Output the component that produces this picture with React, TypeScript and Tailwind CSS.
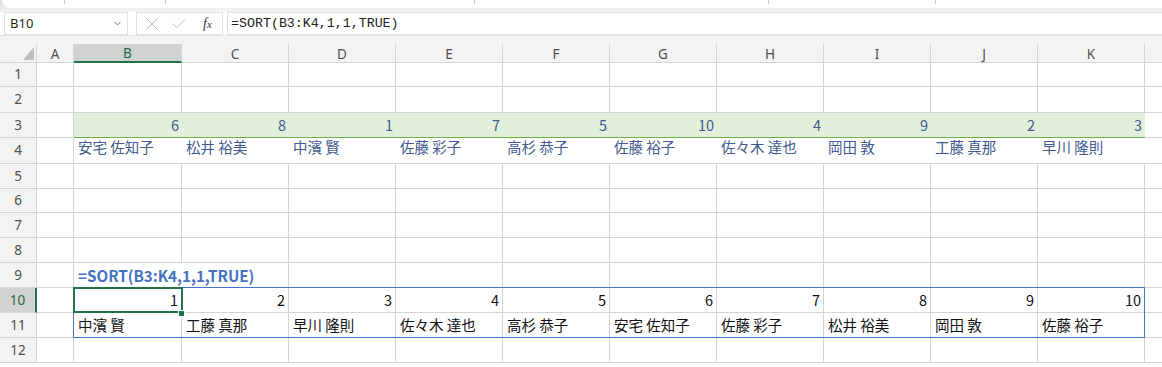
import React from "react";
import { X, Check, ChevronDown } from "lucide-react";

const COLS = ["A", "B", "C", "D", "E", "F", "G", "H", "I", "J", "K"];

const colWidth = (c: string) =>
  c === "A" ? "w-[37px]" : c === "B" ? "w-[108px]" : "w-[107px]";

const ROW_HEIGHTS = [
  "h-[24px]",
  "h-[26px]",
  "h-[25px]",
  "h-[26px]",
  "h-[25px]",
  "h-[24px]",
  "h-[25px]",
  "h-[25px]",
  "h-[25px]",
  "h-[25px]",
  "h-[25px]",
  "h-[25px]",
];

const numbers = [6, 8, 1, 7, 5, 10, 4, 9, 2, 3];
const names = [
  "安宅 佐知子",
  "松井 裕美",
  "中濱 賢",
  "佐藤 彩子",
  "高杉 恭子",
  "佐藤 裕子",
  "佐々木 達也",
  "岡田 敦",
  "工藤 真那",
  "早川 隆則",
];
const sortedNames = [
  "中濱 賢",
  "工藤 真那",
  "早川 隆則",
  "佐々木 達也",
  "高杉 恭子",
  "安宅 佐知子",
  "佐藤 彩子",
  "松井 裕美",
  "岡田 敦",
  "佐藤 裕子",
];

const cellFont = "font-['Noto_Sans_CJK_JP','Noto_Sans',sans-serif] text-[14.5px]";

const Cell = ({
  width,
  className = "",
  children,
}: {
  width: string;
  className?: string;
  children?: React.ReactNode;
}) => (
  <div className={`${width} shrink-0 flex items-center whitespace-nowrap ${className}`}>
    {children}
  </div>
);

const renderRow = (row: number) => {
  const grid = "border-r border-b border-[#d5d5d5]";
  return COLS.map((c, idx) => {
    const w = colWidth(c);
    const i = idx - 1; // data index for B..K
    if (c === "A") return <Cell key={c} width={w} className={grid} />;

    if (row === 3) {
      return (
        <Cell
          key={c}
          width={w}
          className="bg-[#e2efda] border-b border-[#70ad47] justify-end pr-[3px] text-[#3f5a8f]"
        >
          {numbers[i]}
        </Cell>
      );
    }
    if (row === 4) {
      return (
        <Cell
          key={c}
          width={w}
          className="border-b border-[#d5d5d5] pl-[4px] pb-[7px] text-[#3f5a8f]"
        >
          {names[i]}
        </Cell>
      );
    }
    if (row === 9) {
      return (
        <Cell
          key={c}
          width={w}
          className={
            c === "B"
              ? "border-b border-[#d5d5d5] pl-[4px] font-bold text-[15.2px] text-[#4472c4]"
              : grid
          }
        >
          {c === "B" ? "=SORT(B3:K4,1,1,TRUE)" : null}
        </Cell>
      );
    }
    if (row === 10) {
      return (
        <Cell key={c} width={w} className={`${grid} justify-end pr-[3px] text-[#111]`}>
          {i + 1}
        </Cell>
      );
    }
    if (row === 11) {
      return (
        <Cell key={c} width={w} className={`${grid} pl-[4px] text-[#111]`}>
          {sortedNames[i]}
        </Cell>
      );
    }
    return <Cell key={c} width={w} className={grid} />;
  });
};

const App = () => {
  return (
    <div className="w-[1162px] h-[367px] overflow-hidden bg-white select-none">
      {/* Ribbon edge */}
      <div className="h-[12px] bg-gradient-to-b from-[#dedede] via-[#e9e9e9] to-[#f6f6f6]">
        <div className="h-[8px] ml-[2px] bg-white rounded-bl-[8px] flex">
          <div className="w-[62px] shrink-0" />
          <div className="w-px h-[4px] bg-[#c8c8c8]" />
          <div className="w-[100px] shrink-0" />
          <div className="w-px h-[4px] bg-[#c8c8c8]" />
          <div className="w-[308px] shrink-0" />
          <div className="w-px h-[4px] bg-[#c8c8c8]" />
          <div className="w-[293px] shrink-0" />
          <div className="w-px h-[4px] bg-[#c8c8c8]" />
          <div className="w-[166px] shrink-0" />
          <div className="w-px h-[4px] bg-[#c8c8c8]" />
        </div>
      </div>

      {/* Formula bar */}
      <div className="h-[23px] flex bg-white">
        <div className="ml-[4px] w-[124px] h-[23px] border border-[#e1e1e1] flex items-center justify-between pl-[5px] pr-[4px] font-['Noto_Sans',sans-serif] text-[13px] text-[#262626]">
          <span>B10</span>
          <ChevronDown size={11} strokeWidth={1.6} color="#444" />
        </div>
        <div className="ml-[8px] w-[87px] h-[23px] border border-[#e1e1e1] flex items-center">
          <X size={22} strokeWidth={0.8} color="#a6a6a6" className="ml-[4px] shrink-0" />
          <Check size={18} strokeWidth={0.9} color="#a6a6a6" className="ml-[7px] shrink-0" />
          <span className="ml-[15px] font-['Liberation_Serif',serif] italic text-[14px] text-[#333] leading-none">
            f<span className="text-[11px]">x</span>
          </span>
        </div>
        <div className="ml-[4px] flex-1 h-[23px] border border-r-0 border-[#e1e1e1] flex items-center pl-[3px] font-['Liberation_Mono',monospace] text-[13.3px] text-[#222]">
          =SORT(B3:K4,1,1,TRUE)
        </div>
      </div>

      {/* Column headers */}
      <div className="h-[28px] bg-[#f3f3f3] border-t border-[#e3e3e3] flex items-end font-['Noto_Sans',sans-serif] text-[13.5px] text-[#505050]">
        <div className="w-[37px] h-[19px] shrink-0 border-r border-b border-[#d5d5d5] flex items-end justify-end pr-[2px] pb-[2px]">
          <svg width="11" height="13" viewBox="0 0 11 13">
            <polygon points="11,0 11,13 0,13" fill="#bdbdbd" />
          </svg>
        </div>
        {COLS.map((c) =>
          c === "B" ? (
            <div
              key={c}
              className="w-[108px] h-[19px] shrink-0 bg-[#d2d2d2] border-r border-[#d5d5d5] border-b-2 border-b-[#217346] flex items-center justify-center pt-[2px] text-[#1e6b40]"
            >
              {c}
            </div>
          ) : (
            <div
              key={c}
              className={`${colWidth(c)} h-[19px] shrink-0 border-r border-b border-[#d5d5d5] flex items-center justify-center pt-[2px]`}
            >
              {c}
            </div>
          )
        )}
        <div className="flex-1 h-[19px] border-b border-[#d5d5d5]" />
      </div>

      {/* Rows */}
      <div className={`relative ${cellFont}`}>
        {ROW_HEIGHTS.map((h, r) => {
          const row = r + 1;
          return (
            <div key={row} className={`${h} flex`}>
              <div
                className={`w-[37px] shrink-0 flex items-center justify-center font-['Noto_Sans',sans-serif] text-[13.5px] border-b border-[#d5d5d5] ${
                  row === 10
                    ? "bg-[#d2d2d2] text-[#1e6b40] border-r-2 border-r-[#217346]"
                    : "bg-[#f3f3f3] text-[#505050] border-r border-r-[#d5d5d5]"
                }`}
              >
                {row}
              </div>
              {renderRow(row)}
              <div className="flex-1 border-b border-[#d5d5d5]" />
            </div>
          );
        })}

        {/* Spill range outline */}
        <div className="absolute left-[73px] top-[224px] w-[1072px] h-[51px] border border-[#4472c4] pointer-events-none" />
        {/* Active cell */}
        <div className="absolute left-[73px] top-[224px] w-[110px] h-[26px] border-2 border-[#217346] pointer-events-none" />
        <div className="absolute left-[178px] top-[247px] w-[7px] h-[7px] bg-[#217346] border border-white" />
      </div>
    </div>
  );
};

export default App;
